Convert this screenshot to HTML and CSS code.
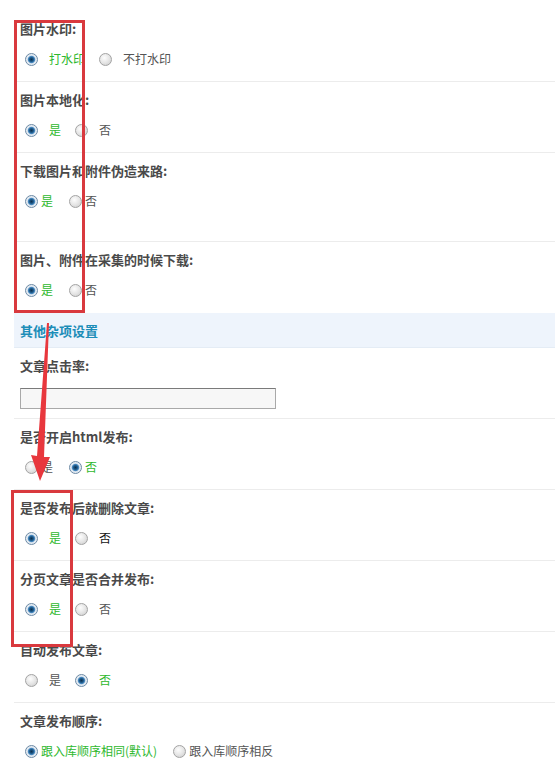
FILE: index.html
```html
<html>

<head>
	<meta charset="utf-8">
	<link rel="stylesheet" href="styles.css">
</head>

<body>
	<div class="settings">
		<div class="row">
			<div class="label">图片水印:</div>
			<div class="opts">
				<label class="opt"><input type="radio" name="wm" checked><span class="on">打水印</span></label>
				<label class="opt"><input type="radio" name="wm"><span>不打水印</span></label>
			</div>
		</div>

		<div class="row">
			<div class="label">图片本地化:</div>
			<div class="opts">
				<label class="opt"><input type="radio" name="local" checked><span class="on">是</span></label>
				<label class="opt"><input type="radio" name="local"><span>否</span></label>
			</div>
		</div>

		<div class="row tall">
			<div class="label">下载图片和附件伪造来路:</div>
			<div class="opts tight">
				<label class="opt"><input type="radio" name="referer" checked><span class="on">是</span></label>
				<label class="opt"><input type="radio" name="referer"><span>否</span></label>
			</div>
		</div>

		<div class="row last">
			<div class="label">图片、附件在采集的时候下载:</div>
			<div class="opts tight">
				<label class="opt"><input type="radio" name="dl" checked><span class="on">是</span></label>
				<label class="opt"><input type="radio" name="dl"><span>否</span></label>
			</div>
		</div>

		<div class="section">其他杂项设置</div>

		<div class="row">
			<div class="label">文章点击率:</div>
			<input type="text" class="input" value="">
		</div>

		<div class="row">
			<div class="label">是否开启html发布:</div>
			<div class="opts tight">
				<label class="opt"><input type="radio" name="html"><span>是</span></label>
				<label class="opt"><input type="radio" name="html" checked><span class="on">否</span></label>
			</div>
		</div>

		<div class="row">
			<div class="label">是否发布后就删除文章:</div>
			<div class="opts">
				<label class="opt"><input type="radio" name="del" checked><span class="on">是</span></label>
				<label class="opt"><input type="radio" name="del"><span class="dark">否</span></label>
			</div>
		</div>

		<div class="row">
			<div class="label">分页文章是否合并发布:</div>
			<div class="opts">
				<label class="opt"><input type="radio" name="merge" checked><span class="on">是</span></label>
				<label class="opt"><input type="radio" name="merge"><span>否</span></label>
			</div>
		</div>

		<div class="row">
			<div class="label">自动发布文章:</div>
			<div class="opts">
				<label class="opt"><input type="radio" name="auto"><span>是</span></label>
				<label class="opt"><input type="radio" name="auto" checked><span class="on">否</span></label>
			</div>
		</div>

		<div class="row last">
			<div class="label">文章发布顺序:</div>
			<div class="opts tight">
				<label class="opt"><input type="radio" name="order" checked><span class="on">跟入库顺序相同(默认)</span></label>
				<label class="opt"><input type="radio" name="order"><span>跟入库顺序相反</span></label>
			</div>
		</div>
	</div>

	<!-- annotations drawn over the form -->
	<div class="mark mark-top"></div>
	<div class="mark mark-bottom"></div>
	<svg class="arrow" width="60" height="160" viewBox="0 0 60 160">
		<polygon points="47,0 49,0 44,134 50,134 40,158 31,132 37,133" fill="#e8373d" />
	</svg>
</body>

</html>
```

FILE: styles.css
```css
body {
	margin: 0;
	padding: 11px 0 0 14px;
	background-color: #fff;
	font-family: "Noto Sans CJK SC", "DejaVu Sans", sans-serif;
	font-size: 12px;
	color: #444;
	overflow: hidden;
}

.settings {
	display: flex;
	flex-direction: column;
}

.row {
	height: 70px;
	padding-left: 6px;
	border-bottom: 1px solid #ececec;
	box-sizing: content-box;
}

.row.tall {
	height: 88px;
}

.row.last {
	border-bottom: none;
	height: 71px;
}

.label {
	margin-top: 10px;
	height: 16px;
	line-height: 16px;
	font-size: 13px;
	font-weight: bold;
	color: #4a4a4a;
}

.opts {
	display: flex;
	align-items: center;
	gap: 14px;
	height: 20px;
	margin-top: 12px;
	padding-left: 5px;
}

.opts.tight {
	gap: 16px;
}

.opt {
	display: flex;
	align-items: center;
	gap: 11px;
	line-height: 20px;
	color: #555;
}

.opts.tight .opt {
	gap: 3px;
}

.opt .on {
	color: #2eb82e;
}

.opt .dark {
	color: #111;
}

input[type="radio"] {
	appearance: none;
	-webkit-appearance: none;
	margin: 0;
	width: 13px;
	height: 13px;
	border-radius: 50%;
	border: 1px solid #a3a3a3;
	background: radial-gradient(circle at 40% 35%, #fdfdfd 0, #e6e6e6 50%, #c9c9c9 100%);
	box-sizing: border-box;
}

input[type="radio"]:checked {
	border-color: #6d8aa5;
	background: radial-gradient(circle at 50% 50%, #0e2f4d 0, #1d5a8a 2px, #4a8ac0 3.2px, #dfe8f1 4.2px, #f4f6f8 100%);
}

.section {
	height: 35px;
	line-height: 35px;
	padding-left: 6px;
	background-color: #eef4fc;
	border-bottom: 1px solid #e4ecf5;
	font-size: 13px;
	font-weight: bold;
	color: #1c8db8;
	box-sizing: border-box;
}

.input {
	display: block;
	margin-top: 14px;
	width: 256px;
	height: 21px;
	border: 1px solid #a9a9a9;
	border-top-color: #7a7a7a;
	background-color: #f7f7f7;
	box-sizing: border-box;
}

.mark {
	position: absolute;
	border: 3px solid #d9393e;
	box-sizing: border-box;
}

.mark-top {
	left: 14px;
	top: 20px;
	width: 71px;
	height: 293px;
}

.mark-bottom {
	left: 11px;
	top: 490px;
	width: 62px;
	height: 157px;
}

.arrow {
	position: absolute;
	left: 0;
	top: 323px;
}
```
